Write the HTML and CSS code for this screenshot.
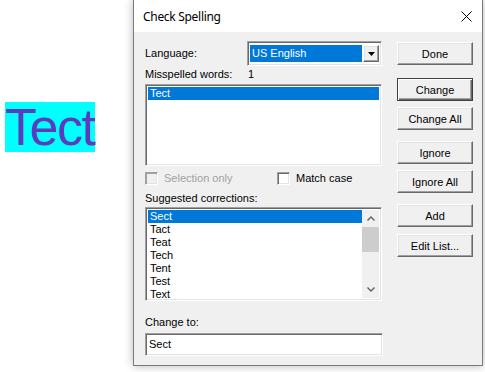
FILE: index.html
```html
<!DOCTYPE html>
<html>
<head>
<meta charset="utf-8">
<link rel="stylesheet" href="styles.css">
</head>
<body>
<div class="page">
  <div class="doc">
    <span class="word">Tect</span>
  </div>
  <div class="dialog">
    <div class="titlebar">
      <span class="title">Check Spelling</span>
      <svg class="close" width="11" height="11" viewBox="0 0 11 11"><path d="M0.5 0.5 L10.5 10.5 M10.5 0.5 L0.5 10.5" stroke="#000" stroke-width="1" fill="none"/></svg>
    </div>
    <div class="body">
      <div class="left">
        <div class="row-lang">
          <span class="lbl">Language:</span>
          <div class="combo">
            <div class="combo-val">US English</div>
            <div class="combo-btn"><svg width="7" height="4" viewBox="0 0 7 4"><path d="M0 0 H7 L3.5 4 Z" fill="#000"/></svg></div>
          </div>
        </div>
        <div class="row-miss">
          <span class="lbl miss-lbl">Misspelled words:</span>
          <span class="lbl">1</span>
        </div>
        <div class="list list1">
          <div class="item sel">Tect</div>
        </div>
        <div class="row-checks">
          <label class="check disabled"><span class="box"></span><span>Selection only</span></label>
          <label class="check match"><span class="box white"></span><span>Match case</span></label>
        </div>
        <div class="lbl sugg-lbl">Suggested corrections:</div>
        <div class="list list2">
          <div class="items">
            <div class="item sel">Sect</div>
            <div class="item">Tact</div>
            <div class="item">Teat</div>
            <div class="item">Tech</div>
            <div class="item">Tent</div>
            <div class="item">Test</div>
            <div class="item">Text</div>
          </div>
          <div class="scroll">
            <div class="arrow"><svg width="8" height="5" viewBox="0 0 8 5"><path d="M0.5 4.5 L4 1 L7.5 4.5" stroke="#606060" stroke-width="1.4" fill="none"/></svg></div>
            <div class="thumb"></div>
            <div class="track"></div>
            <div class="arrow"><svg width="8" height="5" viewBox="0 0 8 5"><path d="M0.5 0.5 L4 4 L7.5 0.5" stroke="#606060" stroke-width="1.4" fill="none"/></svg></div>
          </div>
        </div>
        <div class="lbl change-lbl">Change to:</div>
        <div class="textbox">Sect</div>
      </div>
      <div class="buttons">
        <div class="btn b-done">Done</div>
        <div class="btn b-change default">Change</div>
        <div class="btn b-changeall">Change All</div>
        <div class="btn b-ignore">Ignore</div>
        <div class="btn b-ignoreall">Ignore All</div>
        <div class="btn b-add">Add</div>
        <div class="btn b-edit">Edit List...</div>
      </div>
    </div>
  </div>
</div>
</body>
</html>
```

FILE: styles.css
```css
html, body {
  margin: 0;
  padding: 0;
  background: #ffffff;
}
.page {
  display: flex;
  align-items: flex-start;
  width: 485px;
  height: 372px;
  overflow: hidden;
}
.doc {
  width: 128px;
  padding-left: 5px;
  padding-top: 102px;
}
.word {
  display: inline-block;
  background: #00ffff;
  color: #5b3cbf;
  font-family: "Liberation Sans", Arial, sans-serif;
  font-size: 52px;
  line-height: 50px;
  height: 50px;
  letter-spacing: -1.5px;
  padding-right: 1px;
}
.dialog {
  width: 348px;
  height: 365px;
  border: 1px solid #7a7a7a;
  border-top: none;
  background: #f0f0f0;
  box-shadow: 0 0 9px rgba(0, 0, 0, 0.28);
  display: flex;
  flex-direction: column;
}
.titlebar {
  height: 32px;
  background: #ffffff;
  display: flex;
  align-items: center;
  justify-content: space-between;
  padding: 0 10px 0 9px;
}
.title {
  font-family: "Noto Sans", "Open Sans", sans-serif;
  font-size: 12px;
  letter-spacing: -0.3px;
  color: #000;
  margin-top: 1px;
}
.body {
  display: grid;
  grid-template-columns: 237px 76px;
  column-gap: 15px;
  padding: 10px 9px 0 11px;
  font-family: "Liberation Sans", Arial, sans-serif;
  font-size: 11px;
  color: #000;
}
.lbl {
  line-height: 13px;
}
.left {
  display: flex;
  flex-direction: column;
}
.row-lang {
  display: flex;
  align-items: center;
  justify-content: space-between;
  height: 23px;
}
.combo {
  width: 129px;
  height: 19px;
  background: #fff;
  border: 1px solid;
  border-color: #a0a0a0 #ffffff #ffffff #a0a0a0;
  box-shadow: inset 1px 1px 0 #696969, inset -1px -1px 0 #e3e3e3;
  padding: 2px;
  display: flex;
}
.combo-val {
  flex: 1;
  background: #0078d7;
  color: #fff;
  font-size: 11px;
  line-height: 17px;
  height: 17px;
  padding-left: 2px;
  margin-right: 1px;
  margin-top: 1px;
}
.combo-btn {
  width: 14px;
  height: 15px;
  margin-top: 1px;
  background: #f0f0f0;
  border: 1px solid;
  border-color: #ffffff #696969 #696969 #ffffff;
  box-shadow: inset -1px -1px 0 #a0a0a0, inset 1px 1px 0 #e3e3e3;
  display: flex;
  align-items: center;
  justify-content: center;
}
.row-miss {
  display: flex;
  margin-top: 3px;
  height: 13px;
}
.miss-lbl {
  width: 103px;
}
.list {
  background: #fff;
  border: 1px solid;
  border-color: #a0a0a0 #ffffff #ffffff #a0a0a0;
  box-shadow: inset 1px 1px 0 #696969, inset -1px -1px 0 #e3e3e3;
  box-sizing: border-box;
}
.list1 {
  margin-top: 3px;
  height: 82px;
  padding: 2px;
}
.item {
  height: 13px;
  line-height: 13px;
  padding-left: 2px;
  font-size: 11px;
}
.item.sel {
  background: #0078d7;
  color: #fff;
}
.row-checks {
  display: flex;
  margin-top: 6px;
  height: 13px;
}
.check {
  display: flex;
  align-items: center;
  gap: 6px;
  line-height: 13px;
}
.check.disabled {
  color: #a0a0a0;
  width: 132px;
}
.box {
  width: 11px;
  height: 11px;
  border: 1px solid;
  border-color: #a0a0a0 #ffffff #ffffff #a0a0a0;
  box-shadow: inset 1px 1px 0 #696969, inset -1px -1px 0 #e3e3e3;
  background: #f0f0f0;
}
.check.disabled .box {
  box-shadow: inset 1px 1px 0 #a0a0a0, inset -1px -1px 0 #e3e3e3;
}
.box.white {
  background: #fff;
}
.sugg-lbl {
  margin-top: 7px;
}
.list2 {
  margin-top: 2px;
  height: 94px;
  padding: 2px;
  display: flex;
}
.items {
  flex: 1;
}
.scroll {
  width: 17px;
  display: flex;
  flex-direction: column;
  background: #f0f0f0;
}
.arrow {
  height: 17px;
  display: flex;
  align-items: center;
  justify-content: center;
}
.thumb {
  height: 25px;
  background: #cdcdcd;
}
.track {
  flex: 1;
}
.change-lbl {
  margin-top: 15px;
}
.textbox {
  margin-top: 4px;
  height: 23px;
  width: 238px;
  box-sizing: border-box;
  background: #fff;
  border: 1px solid;
  border-color: #a0a0a0 #ffffff #ffffff #a0a0a0;
  box-shadow: inset 1px 1px 0 #696969, inset -1px -1px 0 #e3e3e3;
  padding: 0 3px 2px 3px;
  display: flex;
  align-items: center;
  font-size: 11px;
}
.buttons {
  display: flex;
  flex-direction: column;
}
.btn {
  height: 23px;
  box-sizing: border-box;
  background: #f0f0f0;
  border: 1px solid;
  border-color: #ffffff #696969 #696969 #ffffff;
  box-shadow: inset -1px -1px 0 #a0a0a0, inset 1px 1px 0 #e3e3e3;
  display: flex;
  align-items: center;
  justify-content: center;
  font-size: 11px;
}
.btn.default {
  border: 1px solid #404040;
  box-shadow: inset 1px 1px 0 #ffffff, inset -1px -1px 0 #696969, inset -2px -2px 0 #a0a0a0;
}
.b-change { margin-top: 13px; }
.b-changeall { margin-top: 6px; }
.b-ignore { margin-top: 11px; }
.b-ignoreall { margin-top: 6px; }
.b-add { margin-top: 11px; }
.b-edit { margin-top: 7px; }
```
